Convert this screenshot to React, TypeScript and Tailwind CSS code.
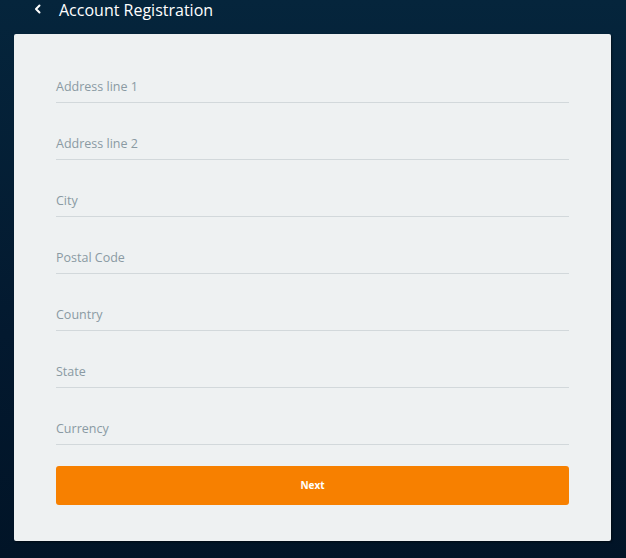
import React from 'react';

const FIELDS = ['Address line 1', 'Address line 2', 'City', 'Postal Code', 'Country', 'State', 'Currency'];

export default function App() {
  return (
    <div
      className="flex h-[558px] w-[626px] flex-col bg-[linear-gradient(180deg,#05253c_0%,#03192f_60%,#011427_100%)]"
      style={{ fontFamily: '"Open Sans", "Noto Sans", sans-serif' }}
    >
      <header className="flex h-[34px] items-start">
        <div className="flex w-[59px] justify-end pr-[17px] pt-[4px]">
          <svg width="8" height="10" viewBox="0 0 8 10" fill="none">
            <path d="M5.5 1.5 L2 5 L5.5 8.5" stroke="white" strokeWidth="2" strokeLinecap="round" strokeLinejoin="round" />
          </svg>
        </div>
        <h1 className="text-[16px] leading-[20px] font-normal text-white">Account Registration</h1>
      </header>

      <main className="ml-[14px] w-[597px] rounded-[2px] bg-[#eef1f2] px-[42px] pt-[12px] pb-[36px] shadow-[1px_1px_2px_rgba(0,0,0,0.5)]">
        {FIELDS.map((label) => (
          <div key={label} className="flex h-[57px] items-end border-b border-[#d2d8db] pb-[7px]">
            <span className="text-[12.5px] leading-[16px] text-[#8a9aa3]">{label}</span>
          </div>
        ))}
        <button
          type="button"
          className="mt-[21px] flex h-[39px] w-full items-center justify-center rounded-[3px] bg-[#f78000] text-[10px] font-bold text-white"
        >
          Next
        </button>
      </main>
    </div>
  );
}
